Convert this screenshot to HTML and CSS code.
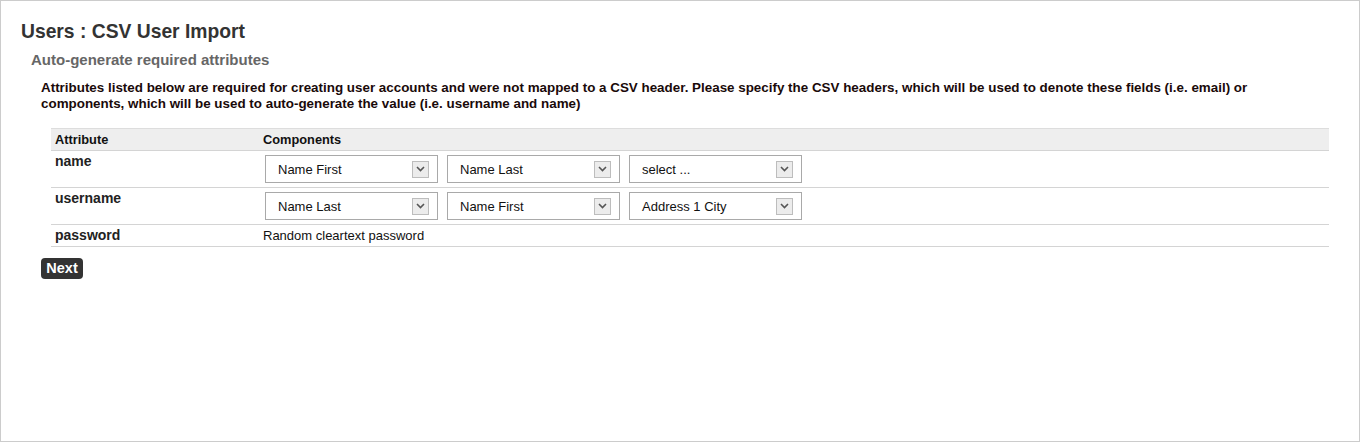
FILE: index.html
```
<!DOCTYPE html>
<html>
<head>
<meta charset="utf-8">
<title>Users : CSV User Import</title>
<link rel="stylesheet" href="styles.css">
</head>
<body>
<div class="page">
  <h1 class="title">Users : CSV User Import</h1>
  <div class="section">
    <h2 class="subtitle">Auto-generate required attributes</h2>
    <div class="body">
      <p class="intro">Attributes listed below are required for creating user accounts and were not mapped to a CSV header. Please specify the CSV headers, which will be used to denote these fields (i.e. email) or components, which will be used to auto-generate the value (i.e. username and name)</p>
      <table class="attrs">
        <thead>
          <tr><th class="col-attr">Attribute</th><th>Components</th></tr>
        </thead>
        <tbody>
          <tr>
            <td class="label">name</td>
            <td>
              <div class="selects">
                <div class="select"><span class="select-text">Name First</span><span class="arrow"><svg width="9" height="6" viewBox="0 0 9 6"><path d="M1 1 L4.5 4.5 L8 1" fill="none" stroke="#555" stroke-width="1.6"/></svg></span></div>
                <div class="select"><span class="select-text">Name Last</span><span class="arrow"><svg width="9" height="6" viewBox="0 0 9 6"><path d="M1 1 L4.5 4.5 L8 1" fill="none" stroke="#555" stroke-width="1.6"/></svg></span></div>
                <div class="select"><span class="select-text">select ...</span><span class="arrow"><svg width="9" height="6" viewBox="0 0 9 6"><path d="M1 1 L4.5 4.5 L8 1" fill="none" stroke="#555" stroke-width="1.6"/></svg></span></div>
              </div>
            </td>
          </tr>
          <tr>
            <td class="label">username</td>
            <td>
              <div class="selects">
                <div class="select"><span class="select-text">Name Last</span><span class="arrow"><svg width="9" height="6" viewBox="0 0 9 6"><path d="M1 1 L4.5 4.5 L8 1" fill="none" stroke="#555" stroke-width="1.6"/></svg></span></div>
                <div class="select"><span class="select-text">Name First</span><span class="arrow"><svg width="9" height="6" viewBox="0 0 9 6"><path d="M1 1 L4.5 4.5 L8 1" fill="none" stroke="#555" stroke-width="1.6"/></svg></span></div>
                <div class="select"><span class="select-text">Address 1 City</span><span class="arrow"><svg width="9" height="6" viewBox="0 0 9 6"><path d="M1 1 L4.5 4.5 L8 1" fill="none" stroke="#555" stroke-width="1.6"/></svg></span></div>
              </div>
            </td>
          </tr>
          <tr class="short">
            <td class="label">password</td>
            <td class="plain">Random cleartext password</td>
          </tr>
        </tbody>
      </table>
      <button class="next" type="button">Next</button>
    </div>
  </div>
</div>
</body>
</html>
```
FILE: styles.css
```
html, body {
  margin: 0;
  padding: 0;
  background: #fff;
}

.page {
  box-sizing: border-box;
  width: 1360px;
  height: 442px;
  border: 1px solid #cccccc;
  padding: 20px 20px 0 20px;
  font-family: "Liberation Sans", Arial, sans-serif;
}

.title {
  margin: 0;
  font-size: 19.3px;
  line-height: 22px;
  font-weight: bold;
  color: #333333;
}

.section {
  margin: 8px 0 0 10px;
}

.subtitle {
  margin: 0;
  font-size: 15px;
  line-height: 18px;
  font-weight: bold;
  color: #666666;
}

.body {
  margin: 11px 0 0 10px;
}

.intro {
  margin: 0;
  max-width: 1270px;
  font-size: 13.4px;
  line-height: 16px;
  font-weight: bold;
  color: #1a0a0a;
}

.attrs {
  box-sizing: border-box;
  width: calc(100% - 20px);
  margin: 16px 10px 0 10px;
  border-collapse: collapse;
}

.attrs th {
  background: #eeeeee;
  border-top: 1px solid #dddddd;
  border-bottom: 1px solid #d4d4d4;
  text-align: left;
  font-size: 12.8px;
  font-weight: bold;
  color: #111;
  height: 21px;
  padding: 0 4px;
  vertical-align: middle;
}

.attrs th.col-attr {
  width: 200px;
}

.attrs td {
  border-bottom: 1px solid #d4d4d4;
  padding: 4px 4px 4px 4px;
  vertical-align: top;
  color: #111;
}

.attrs td.label {
  font-size: 14px;
  font-weight: bold;
  line-height: 16px;
  padding-top: 2px;
  padding-bottom: 3px;
  color: #222;
}

.attrs td.plain {
  font-size: 13px;
  line-height: 16px;
  padding-top: 3px;
  padding-bottom: 1px;
  color: #111;
}

.selects {
  display: flex;
  gap: 9px;
  padding-left: 2px;
}

.select {
  box-sizing: border-box;
  width: 173px;
  height: 28px;
  border: 1px solid #a9a9a9;
  background: #fff;
  display: flex;
  align-items: center;
  justify-content: space-between;
  padding: 0 8px 0 12px;
}

.select-text {
  font-size: 13px;
  color: #111;
}

.arrow {
  box-sizing: border-box;
  width: 17px;
  height: 17px;
  border: 1px solid #bdbdbd;
  background: #ececec;
  display: flex;
  align-items: center;
  justify-content: center;
}

.arrow svg {
  display: block;
}

.next {
  margin-top: 11px;
  display: block;
  background: #333333;
  color: #fff;
  border: none;
  border-radius: 4px;
  font-family: "Liberation Sans", Arial, sans-serif;
  font-size: 14.5px;
  font-weight: bold;
  height: 21px;
  width: 42px;
  padding: 0;
  line-height: 21px;
}
```
